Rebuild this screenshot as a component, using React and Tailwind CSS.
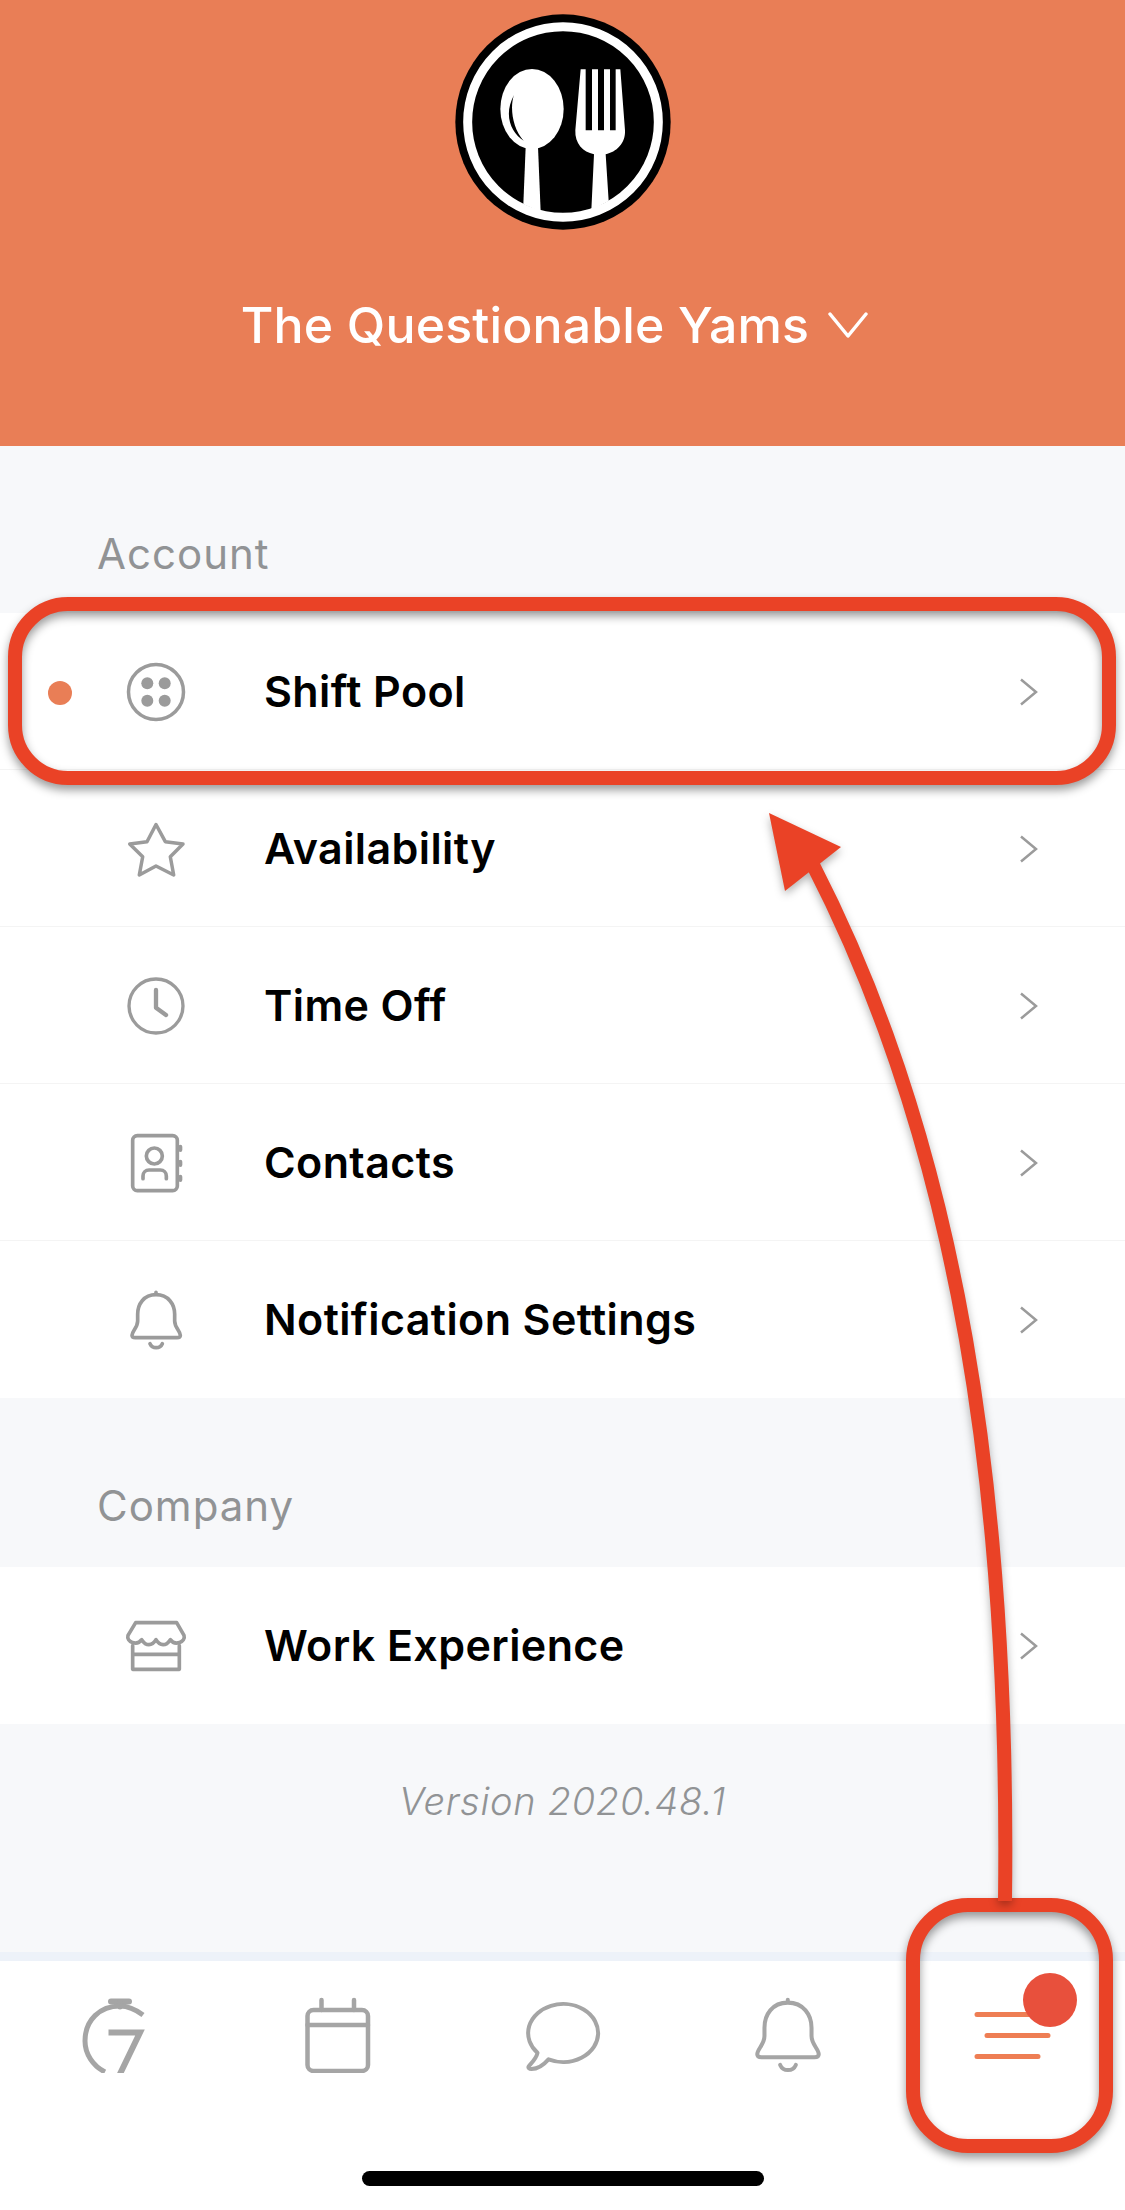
import React from 'react';

// shared stroke props for the grey line icons
const LINE = { fill: 'none', stroke: 'currentColor', strokeLinecap: 'round', strokeLinejoin: 'round' };

function Logo() {
  return (
    <svg width="216" height="216" viewBox="166 41 648 648" className="block">
      <circle cx="490" cy="365" r="323" fill="#000" />
      <circle cx="490" cy="365" r="286" fill="none" stroke="#fff" strokeWidth="27" />
      <ellipse cx="397" cy="326" rx="95" ry="120" fill="#fff" />
      <path d="M343 284C330 320 338 385 372 421C335 398 310 345 343 284Z" fill="#000" />
      <path d="M378 440H415L423 634L371 612Z" fill="#fff" />
      <path d="M543 207H558V390H577V207H595V390H613V207H631V390H648V207H662L676 390C678 430 650 455 618 462L627 602L575 630L583 462C550 455 525 430 527 390Z" fill="#fff" />
    </svg>
  );
}

const ShiftPoolIcon = () => (
  <svg width="66" height="66" viewBox="0 0 66 66" className="text-[#9b9b9b]">
    <circle cx="33" cy="33" r="27.5" strokeWidth="3.5" {...LINE} />
    <g fill="currentColor">
      <circle cx="24.3" cy="24.3" r="6" />
      <circle cx="41.7" cy="24.3" r="6" />
      <circle cx="24.3" cy="41.7" r="6" />
      <circle cx="41.7" cy="41.7" r="6" />
    </g>
  </svg>
);

const StarIcon = () => (
  <svg width="66" height="66" viewBox="0 0 66 66" className="text-[#9b9b9b]">
    <path d="M33 8.5L42.3 25.7L60 28L47.3 40.7L50.7 59L33 50L16.3 59L19.7 40.7L6.7 28L24 25.7Z" strokeWidth="3.5" {...LINE} />
  </svg>
);

const ClockIcon = () => (
  <svg width="66" height="66" viewBox="128 41 198 198" className="text-[#9b9b9b]">
    <circle cx="227" cy="140" r="81" strokeWidth="10" {...LINE} />
    <path d="M227 92V145L257 167" strokeWidth="13" {...LINE} />
  </svg>
);

const ContactsIcon = () => (
  <svg width="66" height="66" viewBox="128 512 198 198" className="text-[#9b9b9b]">
    <rect x="157" y="529" width="134" height="165" rx="14" strokeWidth="11" {...LINE} />
    <circle cx="222" cy="590" r="24" strokeWidth="11" {...LINE} />
    <path d="M188 658V650C188 640 196 632 206 632H240C250 632 258 640 258 650V658" strokeWidth="11" {...LINE} />
    <path d="M300 562V572M300 607V617M300 652V662" strokeWidth="12" {...LINE} />
  </svg>
);

const BellPath = ({ width = 11 }) => (
  <>
    <path d="M227 999V1006M227 1006C190 1006 172 1035 172 1065V1085C172 1105 155 1115 155 1128C155 1133 158 1135 165 1135H290C297 1135 300 1133 300 1128C300 1115 283 1105 283 1085V1065C283 1035 264 1006 227 1006Z" strokeWidth={width} {...LINE} />
    <path d="M209 1153C216 1169 239 1169 246 1153" strokeWidth={width} {...LINE} />
  </>
);

const BellIcon = () => (
  <svg width="66" height="66" viewBox="128 983 198 198" className="text-[#9b9b9b]">
    <BellPath />
  </svg>
);

const StoreIcon = () => (
  <svg width="66" height="66" viewBox="129 158 198 198" className="text-[#9b9b9b]">
    <path d="M167 187H290L312 225C318 245 285 258 271 238C258 258 240 258 228 238C216 258 198 258 185 238C171 258 138 245 144 225Z" strokeWidth="11" {...LINE} />
    <path d="M158 256V327H298V256M158 282H298" strokeWidth="11" {...LINE} />
  </svg>
);

const Chevron = () => (
  <svg width="20" height="30" viewBox="0 0 20 30" className="text-[#9b9b9b]">
    <path d="M3 2.5L18 15L3 27.5" strokeWidth="2.5" fill="none" stroke="currentColor" />
  </svg>
);

function Row({ icon: Icon, label, dot, last }) {
  return (
    <div className={`relative flex items-center h-[157px] pl-[123px] pr-[87px] gap-[75px] bg-white ${last ? '' : 'pt-px border-b border-[#f4f4f4]'}`}>
      {dot && <span className="absolute left-[48px] top-[68px] w-6 h-6 rounded-full bg-[#e97e56]" />}
      <Icon />
      <span className="flex-1 text-[43px] font-semibold tracking-[0.4px] text-black leading-none">{label}</span>
      <Chevron />
    </div>
  );
}

const SectionLabel = ({ children, h }) => (
  <div className={`flex items-end px-[97px] text-[42px] tracking-[1px] text-[#919395] leading-none ${h}`}>{children}</div>
);

// bottom tab icons, each 78 tall from the top of the icon row
const TimerTab = () => (
  <svg width="70" height="78" viewBox="78 1995 70 78" className="text-[#a5a5a5]">
    <path d="M111 2001.5H129" strokeWidth="6" {...LINE} />
    <path d="M120 2002V2007" strokeWidth="5" {...LINE} />
    <path d="M143 2015C135 2009 128 2006 120 2006C100 2006 85 2020 85 2041C85 2054 93 2066 105 2072" strokeWidth="5" fill="none" stroke="currentColor" />
    <path d="M108.5 2032.5H140L119 2076" strokeWidth="6" fill="none" stroke="currentColor" />
  </svg>
);

const CalendarTab = () => (
  <svg width="70" height="78" viewBox="302.5 1995 70 78" className="text-[#a5a5a5]">
    <rect x="307" y="2010" width="60.5" height="61" rx="6" strokeWidth="4.5" {...LINE} />
    <path d="M307 2025H367.5M321 2000V2010M353.5 2000V2010" strokeWidth="4.5" {...LINE} />
  </svg>
);

const ChatTab = () => (
  <svg width="82" height="78" viewBox="521.5 1995 82 78" className="text-[#a5a5a5]">
    <path d="M548 2059.4A35 29 0 1 0 537 2052.8C536 2058 532 2062 528.5 2066C527 2068 529 2069 531 2069C538 2069 544 2064 548 2059.4Z" strokeWidth="4" {...LINE} />
  </svg>
);

const BellTab = () => (
  <svg width="70" height="78" viewBox="145 988 165 184" className="text-[#a5a5a5]">
    <BellPath width={9.5} />
  </svg>
);

const MenuTab = () => (
  <div className="relative">
    <svg width="95" height="78" viewBox="965 1995 95 78">
      <path d="M977 2014.5H1040M987 2035.5H1048M977 2056.5H1038" stroke="#ee7e54" strokeWidth="5" strokeLinecap="round" />
    </svg>
    <span className="absolute left-[58px] top-[-22px] w-[54px] h-[54px] rounded-full bg-[#e8503c]" />
  </div>
);

// red annotation marks drawn over the screenshot
function Annotations() {
  return (
    <>
      <div className="absolute left-[8px] top-[597px] w-[1108px] h-[188px] rounded-[60px] border-[14px] border-[#ea4226] drop-shadow-[0_5px_5px_rgba(0,0,0,0.4)]" />
      <div className="absolute left-[906px] top-[1898px] w-[207px] h-[255px] rounded-[62px] border-[14px] border-[#ea4226] drop-shadow-[0_5px_5px_rgba(0,0,0,0.4)]" />
      <svg width="1125" height="2210" viewBox="0 0 1125 2210" className="absolute inset-0 drop-shadow-[0_4px_4px_rgba(0,0,0,0.3)]">
        <path d="M1005 1901C1010 1500 960 1150 813 865" fill="none" stroke="#ea4226" strokeWidth="14" />
        <path d="M769 813L841 847L785 891Z" fill="#ea4226" />
      </svg>
    </>
  );
}

export default function App() {
  return (
    <div className="relative flex flex-col w-[1125px] h-[2210px] overflow-hidden bg-[#f7f8fa] font-['Inter',sans-serif]">
      <header className="flex flex-col items-center h-[446px] pt-[14px] bg-[#e97e56] text-white">
        <Logo />
        <div className="flex items-center gap-[19px] mt-[64px] pr-[16px]">
          <span className="text-[50px] font-medium tracking-[0.15px] leading-[62px]">The Questionable Yams</span>
          <svg width="40" height="26" viewBox="0 0 40 26">
            <path d="M2 2L20 24L38 2" fill="none" stroke="#fff" strokeWidth="3.5" strokeLinecap="round" strokeLinejoin="round" />
          </svg>
        </div>
      </header>

      <SectionLabel h="h-[167px] pb-[38px]">Account</SectionLabel>
      <Row icon={ShiftPoolIcon} label="Shift Pool" dot />
      <Row icon={StarIcon} label="Availability" />
      <Row icon={ClockIcon} label="Time Off" />
      <Row icon={ContactsIcon} label="Contacts" />
      <Row icon={BellIcon} label="Notification Settings" last />

      <SectionLabel h="h-[169px] pb-[40px]">Company</SectionLabel>
      <Row icon={StoreIcon} label="Work Experience" last />

      <p className="pt-[57px] text-center text-[38px] italic font-light tracking-[0.7px] text-[#919395] leading-[40px]">Version 2020.48.1</p>

      <nav className="mt-auto h-[258px] border-t-[9px] border-[#edf2f9] bg-white pt-[34px]">
        <div className="grid grid-cols-5 h-[78px] justify-items-center">
          <TimerTab />
          <CalendarTab />
          <ChatTab />
          <BellTab />
          <MenuTab />
        </div>
        <div className="w-[402px] h-[15px] mx-auto mt-[98px] rounded-full bg-black" />
      </nav>

      <Annotations />
    </div>
  );
}
